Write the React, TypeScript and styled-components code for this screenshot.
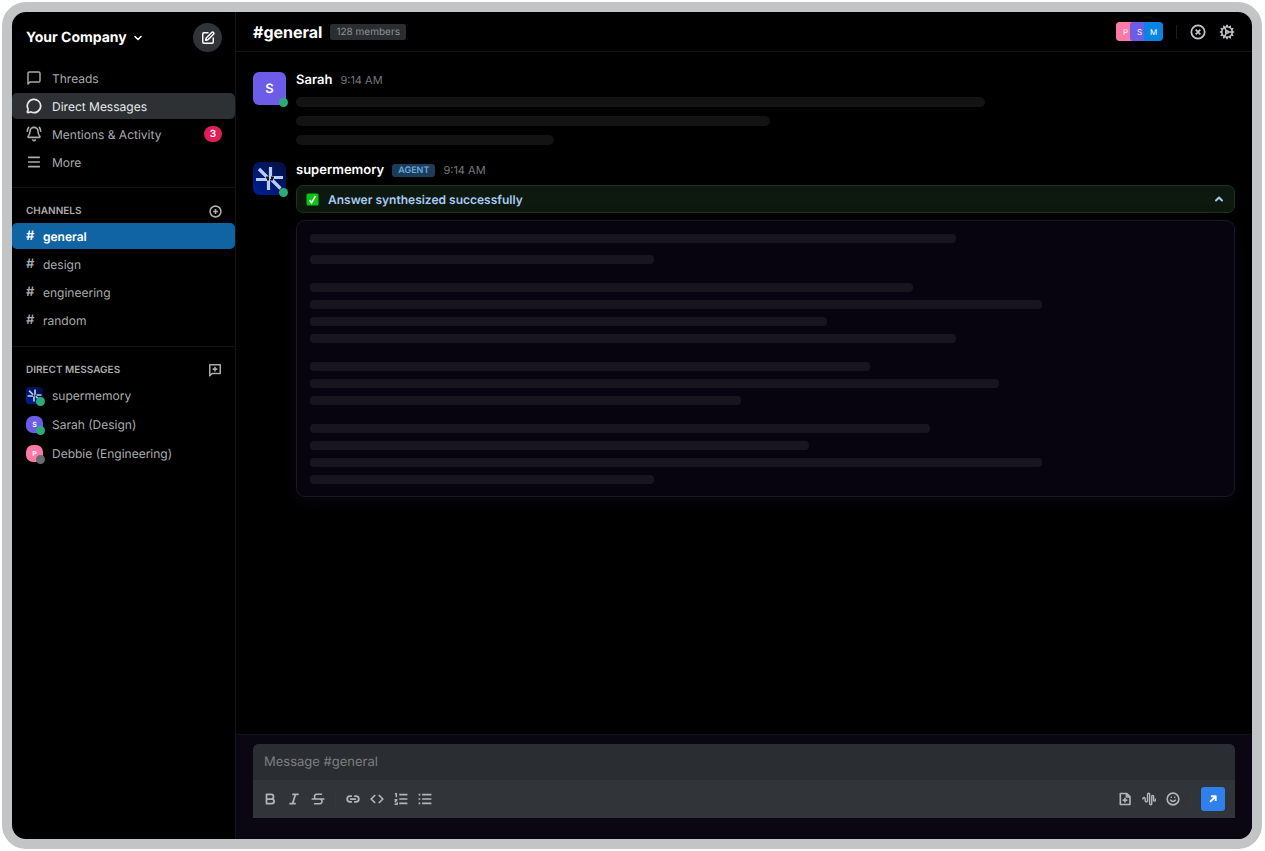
import React from 'react';
import styled, { createGlobalStyle, css } from 'styled-components';
import { MessageCircle, BellRing, Menu, ChevronDown, ChevronUp, SquarePen, Code, Cog, Link2, Smile } from 'lucide-react';

const GlobalStyle = createGlobalStyle`
  *, *::before, *::after { box-sizing: border-box; }
  body { margin: 0; background: #fff; font-family: Inter, "Liberation Sans", sans-serif; text-rendering: geometricPrecision; }
  button, input { font: inherit; color: inherit; text-rendering: inherit; }
  button { border: 0; padding: 0; background: none; cursor: pointer; }
  a { color: inherit; text-decoration: none; }
  h1, h2, p, ul { margin: 0; padding: 0; }
  ul { list-style: none; }
  svg { display: block; flex: none; }
`;

const Page = styled.div`
  display: flex;
  height: 100vh;
  min-height: 600px;
  padding: 2px 3px 2px 2px;
`;
const Frame = styled.div`
  flex: 1;
  display: flex;
  min-width: 0;
  border: 10px solid #c3c4c6;
  border-radius: 24px;
  background: #000;
  overflow: hidden;
`;
const Sidebar = styled.aside`
  flex: none;
  width: 224px;
  border-right: 1px solid #141416;
  color: #ababad;
`;
const Workspace = styled.header`
  display: flex;
  align-items: center;
  justify-content: space-between;
  padding: 0 13px 0 14px;
  height: 51px;
`;
const CompanyButton = styled.button`
  display: flex;
  align-items: center;
  gap: 5px;
  color: #fff;
  font-size: 14px;
  font-weight: 700;
`;
const ComposeButton = styled.button`
  display: grid;
  place-items: center;
  width: 29px;
  height: 29px;
  border-radius: 50%;
  background: #303437;
  color: #fff;
`;
const Section = styled.section`
  border-top: 1px solid #141416;
  padding: 12px 0 11px;
`;
const MainNav = styled.nav`
  padding: 2px 0 10px;
`;
const NavLink = styled.a<{ $active?: boolean }>`
  display: flex;
  align-items: center;
  gap: 10px;
  height: 26px;
  margin-bottom: 2px;
  padding: 0 13px 0 14px;
  border-radius: 5px;
  font-size: 12px;
  ${p => p.$active && css`background: #2d3134; color: #e8e8ea;`}
`;
const Count = styled.span`
  margin-left: auto;
  padding: 0 6px;
  border-radius: 8px;
  background: #e01e5a;
  color: #fff;
  font-size: 10px;
  font-weight: 600;
  line-height: 16px;
`;
const SectionHead = styled.div`
  display: flex;
  align-items: center;
  justify-content: space-between;
  height: 22px;
  padding: 0 13px 0 14px;
`;
const SectionTitle = styled.h2`
  font-size: 10px;
  font-weight: 600;
  line-height: 16px;
`;
const ChannelList = styled.ul`
  padding-top: 1px;
`;
const ChannelLink = styled.a<{ $active?: boolean }>`
  display: flex;
  align-items: center;
  gap: 8px;
  height: 26px;
  margin-bottom: 2px;
  padding: 0 13px 0 14px;
  border-radius: 5px;
  font-size: 12px;
  ${p => p.$active && css`background: #1164a3; color: #fff; font-weight: 600;`}
`;
const Hash = styled.span`
  width: 9px;
  font-size: 13px;
  font-weight: 600;
`;
const PersonLink = styled.a`
  display: flex;
  align-items: center;
  gap: 9px;
  height: 29px;
  padding: 0 13px 0 14px;
  font-size: 12px;
`;
const Avatar = styled.span<{ $large?: boolean; $square?: boolean; $color: string }>`
  position: relative;
  flex: none;
  display: grid;
  place-items: center;
  width: ${p => (p.$large ? 33 : 17)}px;
  height: ${p => (p.$large ? 33 : 17)}px;
  border-radius: ${p => (p.$large ? 6 : p.$square ? 3 : 7)}px;
  background: ${p => p.$color};
  color: #fff;
  font-size: ${p => (p.$large ? 13 : 7)}px;
  font-weight: 600;
`;
const Presence = styled.span<{ $away?: boolean }>`
  position: absolute;
  right: -2px;
  bottom: -2px;
  width: 9px;
  height: 9px;
  border-radius: 50%;
  background: ${p => (p.$away ? '#696a6d' : '#2bac76')};
`;
const Main = styled.main`
  flex: 1;
  display: flex;
  flex-direction: column;
  min-width: 0;
`;
const TopBar = styled.header`
  display: flex;
  align-items: center;
  height: 40px;
  padding: 0 17px;
  border-bottom: 1px solid #141416;
`;
const ChannelName = styled.h1`
  color: #fff;
  font-size: 16px;
  font-weight: 700;
`;
const Members = styled.span`
  margin: 0 auto 0 8px;
  padding: 0 6px;
  border-radius: 3px;
  background: #2a2d31;
  color: #909195;
  font-size: 10px;
  line-height: 16px;
`;
const Faces = styled.div`
  display: flex;
  border-radius: 3px;
  overflow: hidden;
`;
const Face = styled.span<{ $color: string }>`
  display: grid;
  place-items: center;
  width: 19px;
  height: 19px;
  border-radius: 3px;
  background: ${p => p.$color};
  color: #fff;
  font-size: 8px;
  & + & { margin-left: -5px; }
`;
const Rule = styled.span<{ $dark?: boolean }>`
  width: 1px;
  height: 14px;
  background: ${p => (p.$dark ? '#35383c' : '#1d1d20')};
`;
const TopActions = styled.div`
  display: flex;
  align-items: center;
  gap: 13px;
  color: #c6c7ca;
`;
const Feed = styled.div`
  flex: 1;
  min-height: 0;
  padding: 20px 17px 0;
`;
const Message = styled.article`
  display: flex;
  gap: 10px;
`;
const Content = styled.div`
  flex: 1;
  min-width: 0;
`;
const Byline = styled.div`
  display: flex;
  align-items: center;
  gap: 8px;
  height: 16px;
  color: #76777a;
  font-size: 11px;
`;
const Author = styled.span`
  color: #fff;
  font-size: 13px;
  font-weight: 600;
`;
const AgentTag = styled.span`
  padding: 0 6px;
  border-radius: 3px;
  background: #1d3c58;
  color: #69a8df;
  font-size: 9px;
  font-weight: 600;
  line-height: 13px;
`;
const TextLines = styled.div`
  max-width: 861px;
  padding: 9px 0 8px;
`;
const Line = styled.div<{ $width: number }>`
  width: ${p => p.$width}%;
  height: 10px;
  margin-bottom: 9px;
  border-radius: 5px;
  background: #131313;
`;
const Status = styled.button`
  display: flex;
  align-items: center;
  gap: 9px;
  width: 100%;
  height: 28px;
  margin: 7px 0;
  padding: 0 9px;
  border: 1px solid #1c3320;
  border-radius: 7px;
  background: #0d190f;
  color: #a9c9f5;
  font-size: 12px;
  font-weight: 600;
`;
const StatusText = styled.span`
  margin-right: auto;
`;
const Answer = styled.div`
  padding: 13px 13px 12px;
  border: 1px solid #1a1824;
  border-radius: 9px;
  background: #07030f;
  box-shadow: 0 4px 16px #0a0712;
`;
const Paragraph = styled.div<{ $loose?: boolean }>`
  display: flex;
  flex-direction: column;
  gap: ${p => (p.$loose ? 12 : 8)}px;
  max-width: 861px;
  & + & { margin-top: 19px; }
`;
const AnswerLine = styled.div<{ $width: number }>`
  width: ${p => p.$width}%;
  height: 9px;
  border-radius: 4px;
  background: #18151f;
`;
const Composer = styled.footer`
  padding: 9px 17px 21px;
  border-top: 1px solid #12101b;
  background: #0a0713;
`;
const Editor = styled.form`
  border-radius: 6px 6px 0 0;
  overflow: hidden;
  background: #313438;
`;
const MessageInput = styled.input`
  display: block;
  width: 100%;
  height: 36px;
  padding: 0 11px;
  border: 0;
  outline: 0;
  background: #2a2d31;
  font-size: 13px;
  &::placeholder { color: #7d7f83; opacity: 1; }
`;
const Tools = styled.div`
  display: flex;
  align-items: center;
  gap: 10px;
  height: 38px;
  padding: 0 10px;
  color: #b3b5b8;
`;
const ToolGroup = styled.div`
  display: flex;
  gap: 10px;
`;
const Spacer = styled.span`
  flex: 1;
`;
const SendButton = styled.button`
  display: grid;
  place-items: center;
  width: 24px;
  height: 24px;
  border-radius: 3px;
  background: #2f80ed;
  color: #fff;
`;

const Logo = ({ size }: { size: number }) => (
  <svg width={size} height={size} viewBox="0 0 33 33" aria-hidden="true">
    <defs>
      <linearGradient id="logo-bg" x1="0" y1="1" x2="1" y2="0">
        <stop offset="0" stopColor="#001f96" />
        <stop offset="1" stopColor="#00103e" />
      </linearGradient>
    </defs>
    <rect width="33" height="33" rx="7" fill="url(#logo-bg)" />
    <g fill="none" stroke="#bacdfa" strokeWidth="3.2">
      <path d="M17.500 5v10.500h12.500M3 17.500h12.500V28" />
      <path d="M6 7l9 9M18.500 17.500l9 9" />
    </g>
    <path d="M13 15.500h3M18 15.500h3M14 17.500h2M18 17.500h2" stroke="#10131c" strokeWidth="2" />
  </svg>
);

type GlyphProps = { d: string; size?: number; weight?: number; children?: React.ReactNode };

/* Stroked glyph on the usual 24-unit grid. */
const Glyph = ({ d, size = 14, weight = 3, children }: GlyphProps) => (
  <svg width={size} height={size} viewBox="0 0 24 24" fill="none" stroke="currentColor" strokeWidth={weight} strokeLinejoin="round" aria-hidden="true">
    {children}
    <path d={d} />
  </svg>
);

const icons = {
  thread: 'M3 21V5a2 2 0 0 1 2-2h14a2 2 0 0 1 2 2v11a2 2 0 0 1-2 2H6z',
  addChat: 'M3 22V3h18v15H7zM12 6.500v8M8 10.500h8',
  bold: 'M6 4h8a4 4 0 0 1 0 8H6zM6 12h9a4 4 0 0 1 0 8H6zM6 4v16',
  italic: 'M9 4h11M4 20h11M14.500 4l-5 16',
  strike: 'M19 4h-9a4 4 0 0 0-4 4c0 2 1 3.500 3 4M15 12c3 0 4 2 4 4a4 4 0 0 1-4 4H5M1 12h22',
  ordered: 'M9 4.500h14M9 12h14M9 19.500h14M1.500 3H4v6M1 13.500h4l-3.500 4M1 21h4.500v-3.500',
  bulleted: 'M7 4.500h16M7 12h16M7 19.500h16M1 4.500h3M1 12h3M1 19.500h3',
  fileAdd: 'M4 2.500h11l5.500 5.500v13.500H4zM14.500 3v5.500H20M12 10v8M8 14h8',
  wave: 'M1.500 13v-1.500a2 2 0 0 1 4 0V15a2 2 0 0 0 4 0V4a1.800 1.800 0 0 1 3.600 0v16a1.800 1.800 0 0 0 3.600 0V7.500a1.600 1.600 0 0 1 3.200 0V14a1.600 1.600 0 0 0 3.200 0v-3',
  send: 'M5 19L18 6M7 5.500h11.500V17',
};

const channels = ['general', 'design', 'engineering', 'random'];
const shortLines = [80, 55, 30];
const answer = [[75, 40], [70, 85, 60, 75], [65, 80, 50], [72, 58, 85, 40]];

const Tool = ({ label, children }: { label: string; children: React.ReactNode }) => (
  <button type="button" aria-label={label}>{children}</button>
);

export default function App() {
  return (
    <Page>
      <GlobalStyle />
      <Frame>
        <Sidebar>
          <Workspace>
            <CompanyButton>Your Company <ChevronDown size={12} strokeWidth={3} /></CompanyButton>
            <ComposeButton aria-label="New message"><SquarePen size={14} strokeWidth={2.5} /></ComposeButton>
          </Workspace>
          <MainNav>
            <NavLink href="#threads"><Glyph size={16} weight={2.2} d={icons.thread} />Threads</NavLink>
            <NavLink href="#direct" $active><MessageCircle size={16} strokeWidth={2.6} />Direct Messages</NavLink>
            <NavLink href="#mentions"><BellRing size={16} strokeWidth={2.4} />Mentions &amp; Activity<Count>3</Count></NavLink>
            <NavLink href="#more"><Menu size={16} strokeWidth={2.4} />More</NavLink>
          </MainNav>
          <Section>
            <SectionHead>
              <SectionTitle>CHANNELS</SectionTitle>
              <Tool label="Add channel"><Glyph size={13} d="M12 7.500v9M7.500 12h9"><circle cx="12" cy="12" r="10" /></Glyph></Tool>
            </SectionHead>
            <ChannelList>
              {channels.map((name, i) => (
                <li key={name}><ChannelLink href={'#' + name} $active={i === 0}><Hash>#</Hash>{name}</ChannelLink></li>
              ))}
            </ChannelList>
          </Section>
          <Section>
            <SectionHead>
              <SectionTitle>DIRECT MESSAGES</SectionTitle>
              <Tool label="New direct message"><Glyph weight={2.6} d={icons.addChat} /></Tool>
            </SectionHead>
            <PersonLink href="#supermemory"><Avatar $square $color="transparent"><Logo size={17} /><Presence /></Avatar>supermemory</PersonLink>
            <PersonLink href="#sarah"><Avatar $color="#6c5ce7">S<Presence /></Avatar>Sarah (Design)</PersonLink>
            <PersonLink href="#debbie"><Avatar $color="#fd79a8">P<Presence $away /></Avatar>Debbie (Engineering)</PersonLink>
          </Section>
        </Sidebar>
        <Main>
          <TopBar>
            <ChannelName>#general</ChannelName>
            <Members>128 members</Members>
            <TopActions>
              <Faces>
                <Face $color="#fd79a8">P</Face>
                <Face $color="#6c5ce7">S</Face>
                <Face $color="#0984e3">M</Face>
              </Faces>
              <Rule />
              <Tool label="Close"><Glyph size={16} weight={2.6} d="M8.500 8.500l7 7M15.500 8.500l-7 7"><circle cx="12" cy="12" r="10" /></Glyph></Tool>
              <Tool label="Settings"><Cog size={16} strokeWidth={2.3} /></Tool>
            </TopActions>
          </TopBar>
          <Feed>
            <Message>
              <Avatar $large $color="#6c5ce7">S<Presence /></Avatar>
              <Content>
                <Byline><Author>Sarah</Author><time>9:14 AM</time></Byline>
                <TextLines>{shortLines.map(w => <Line key={w} $width={w} />)}</TextLines>
              </Content>
            </Message>
            <Message>
              <Avatar $large $color="transparent"><Logo size={33} /><Presence /></Avatar>
              <Content>
                <Byline><Author>supermemory</Author><AgentTag>AGENT</AgentTag><time>9:14 AM</time></Byline>
                <Status aria-expanded="true">
                  <svg width="13" height="13" viewBox="0 0 13 13" aria-hidden="true">
                    <rect x="0.500" y="0.500" width="12" height="12" rx="1.500" fill="#08c414" />
                    <path d="M3.500 7l2 2.800L9.500 3" fill="none" stroke="#fff" strokeWidth="1.500" />
                  </svg>
                  <StatusText>Answer synthesized successfully</StatusText>
                  <ChevronUp size={12} strokeWidth={4} />
                </Status>
                <Answer>
                  {answer.map((lines, i) => (
                    <Paragraph key={i} $loose={i === 0}>
                      {lines.map((w, j) => <AnswerLine key={j} $width={w} />)}
                    </Paragraph>
                  ))}
                </Answer>
              </Content>
            </Message>
          </Feed>
          <Composer>
            <Editor onSubmit={e => e.preventDefault()}>
              <MessageInput aria-label="Message #general" placeholder="Message #general" />
              <Tools>
                <ToolGroup>
                  <Tool label="Bold"><Glyph d={icons.bold} /></Tool>
                  <Tool label="Italic"><Glyph d={icons.italic} /></Tool>
                  <Tool label="Strikethrough"><Glyph weight={2.6} d={icons.strike} /></Tool>
                </ToolGroup>
                <Rule $dark />
                <ToolGroup>
                  <Tool label="Link"><Link2 size={14} strokeWidth={3} /></Tool>
                  <Tool label="Code"><Code size={14} strokeWidth={3} /></Tool>
                  <Tool label="Ordered list"><Glyph weight={2.6} d={icons.ordered} /></Tool>
                  <Tool label="Bulleted list"><Glyph weight={2.6} d={icons.bulleted} /></Tool>
                </ToolGroup>
                <Spacer />
                <ToolGroup>
                  <Tool label="Attach file"><Glyph weight={2.8} d={icons.fileAdd} /></Tool>
                  <Tool label="Record audio"><Glyph weight={2.4} d={icons.wave} /></Tool>
                  <Tool label="Emoji"><Smile size={14} strokeWidth={2.8} /></Tool>
                </ToolGroup>
                <Rule $dark />
                <SendButton aria-label="Send"><Glyph size={10} weight={4.5} d={icons.send} /></SendButton>
              </Tools>
            </Editor>
          </Composer>
        </Main>
      </Frame>
    </Page>
  );
}
